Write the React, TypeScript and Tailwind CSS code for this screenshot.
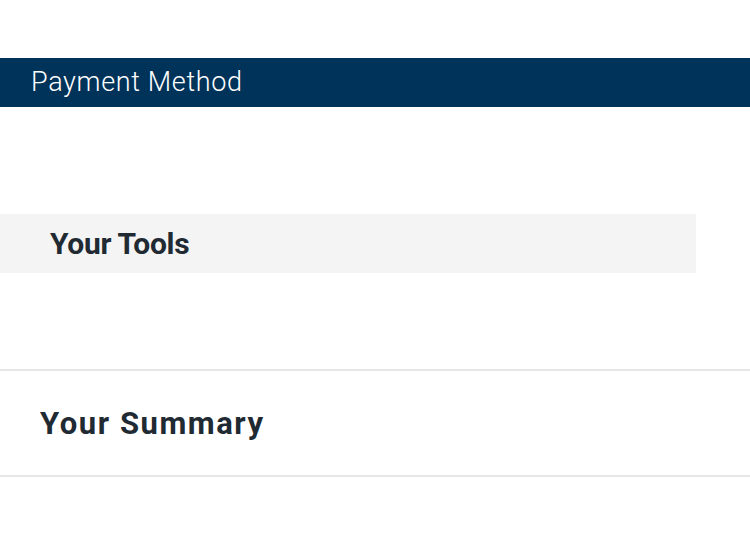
export default function App() {
  return (
    <div className="w-[750px] h-[538px] bg-white overflow-hidden" style={{ fontFamily: 'Roboto, "Liberation Sans", sans-serif' }}>
      <div className="h-[58px]" />
      <div className="h-[49px] bg-[#003359] flex items-center pl-[31px]">
        <span className="text-[27px] font-light text-white leading-none tracking-[0.65px]">Payment Method</span>
      </div>
      <div className="h-[107px]" />
      <div className="w-[696px] h-[59px] bg-[#f4f4f4] flex items-center pl-[50px]">
        <h2 className="text-[30px] font-bold text-[#1f2a33] leading-none tracking-[-0.3px]">Your Tools</h2>
      </div>
      <div className="h-[96px]" />
      <div className="border-t-2 border-b-2 border-[#e6e6e6] h-[108px] flex items-center pl-[40px]">
        <h2 className="text-[31px] font-bold text-[#1f2a33] leading-none tracking-[1.55px]">Your Summary</h2>
      </div>
    </div>
  );
}
